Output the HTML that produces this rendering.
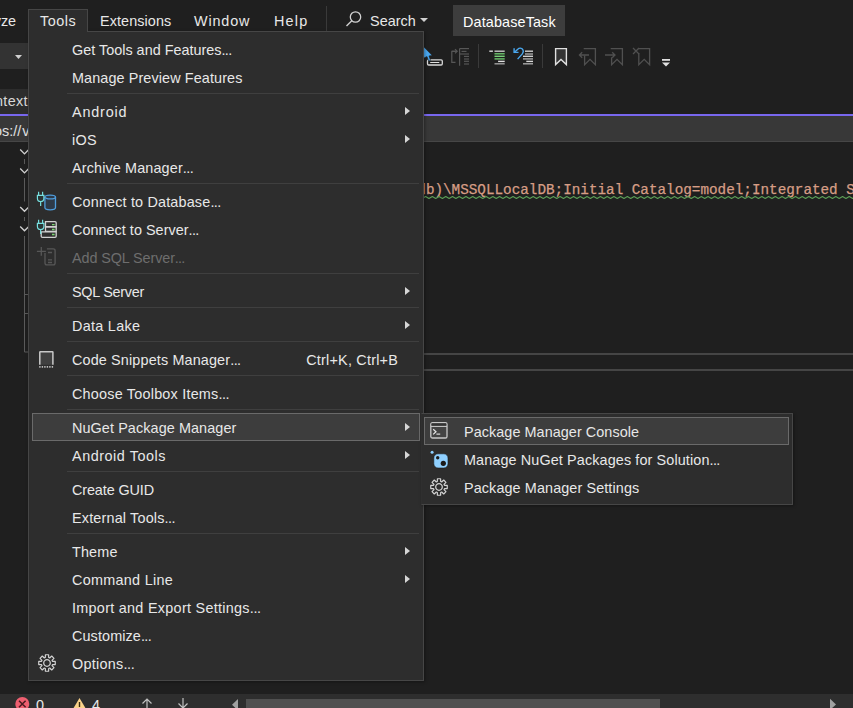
<!DOCTYPE html>
<html><head><meta charset="utf-8">
<style>
*{margin:0;padding:0;box-sizing:border-box}
html,body{width:853px;height:708px;overflow:hidden;background:#1f1f1f}
body{position:relative;font-family:"Liberation Sans",sans-serif;font-size:14.4px;color:#e8e8e8}
.a{position:absolute}
.t{position:absolute;white-space:nowrap;line-height:18px;height:18px}
.menu{position:absolute;background:#2d2d2d;border:1px solid #464646}
.row{position:absolute;left:32px;width:388px;height:28px}
.row .l{position:absolute;left:40px;top:6px;line-height:18px;white-space:nowrap}
.row .r{position:absolute;right:23px;top:6px;line-height:18px;white-space:nowrap}
.sep{position:absolute;left:67px;width:352px;height:1px;background:#3f3f3f}
.arr{position:absolute;left:373px;top:10px;width:0;height:0;border-top:4.8px solid transparent;border-bottom:4.8px solid transparent;border-left:5.2px solid #d6d6d6}
.dis{color:#6e6e6e}
.hl{background:#3d3d3d;border:1px solid #6a6a6a}
svg{position:absolute;overflow:visible}
i.d{font-style:normal;letter-spacing:-0.7px}
</style></head><body>

<!-- menubar -->
<div class="t" style="left:-9.5px;top:12px">lyze</div>

<div id="b2" class="t" style="left:100px;top:12px;letter-spacing:0.090px">Extensions</div>
<div id="b3" class="t" style="left:194px;top:12px;letter-spacing:0.860px">Window</div>
<div id="b4" class="t" style="left:274px;top:12px;letter-spacing:1.200px">Help</div>
<div class="a" style="left:326px;top:6px;width:1px;height:26px;background:#3a3a3a"></div>
<svg style="left:340px;top:8px" width="24" height="20" viewBox="0 0 24 20"><circle cx="15.5" cy="9" r="5.2" fill="none" stroke="#d0d0d0" stroke-width="1.3"/><line x1="11.8" y1="12.8" x2="6.5" y2="18" stroke="#d0d0d0" stroke-width="1.4"/></svg>
<div id="b5" class="t" style="left:370px;top:12px;letter-spacing:0.040px">Search</div>
<svg style="left:419px;top:17px" width="10" height="6"><path d="M1 1h8l-4 4z" fill="#d0d0d0"/></svg>
<div class="a" style="left:453px;top:5px;width:112px;height:31px;background:#3d3d3d"></div>
<div id="b6" class="t" style="left:463px;top:13px;color:#fff;letter-spacing:0.128px">DatabaseTask</div>

<!-- toolbar -->
<div class="a" style="left:0;top:43px;width:28px;height:26px;background:#333"></div>
<svg style="left:15px;top:55px" width="10" height="6"><path d="M0 0h7l-3.5 4z" fill="#d0d0d0"/></svg>

<!-- toolbar icons (origin 422,42) -->
<svg style="left:422px;top:42px" width="260" height="28" viewBox="0 0 260 28">
  <rect x="5.5" y="17.8" width="14.8" height="5.2" rx="1.2" fill="#1f1f1f" stroke="#d8d8d8" stroke-width="1.3"/>
  <line x1="8.2" y1="20.5" x2="17.3" y2="20.5" stroke="#e0e0e0" stroke-width="1"/>
  <path d="M1.5 4.6 L10.2 13.4 L7 13.9 L8.6 18.4 L6.6 19 L5 14.6 L1.5 16.2Z" fill="#4aa8f0" stroke="#1f1f1f" stroke-width="0.6"/>
  <g stroke="#575757" stroke-width="1.2" fill="none">
    <path d="M33.5 9.3 H29.8 V20.4 H33.5"/><path d="M30 9.3 H35"/><path d="M33 7.2 L35.2 9.3 L33 11.4"/>
    <line x1="37.6" y1="6.4" x2="37.6" y2="23.7"/>
    <line x1="37.6" y1="6.6" x2="47" y2="6.6"/><line x1="39.5" y1="9.4" x2="44.5" y2="9.4"/>
    <line x1="37.6" y1="12" x2="47" y2="12"/><line x1="42" y1="14.4" x2="47" y2="14.4"/>
    <line x1="42" y1="17" x2="47" y2="17"/><line x1="42" y1="19.3" x2="47" y2="19.3"/><line x1="42" y1="22" x2="47" y2="22"/>
  </g>
  <line x1="56.5" y1="2" x2="56.5" y2="26" stroke="#3a3a3a" stroke-width="1"/>
  <g stroke-width="1.4">
    <line x1="67.3" y1="9.2" x2="70.9" y2="9.2" stroke="#d8d8d8"/>
    <line x1="72.5" y1="9.2" x2="82.7" y2="9.2" stroke="#c8c8c8"/>
    <line x1="72.5" y1="11.8" x2="82.7" y2="11.8" stroke="#6cc46c"/>
    <line x1="72.5" y1="14.3" x2="82.7" y2="14.3" stroke="#78d078"/>
    <line x1="72.5" y1="16.9" x2="82.7" y2="16.9" stroke="#6cc46c"/>
    <line x1="76.1" y1="19.4" x2="82.7" y2="19.4" stroke="#e0e0e0"/>
    <line x1="72.5" y1="21.8" x2="82.7" y2="21.8" stroke="#a0a0a0"/>
  </g>
  <g stroke="#4aa8f0" stroke-width="1.4" fill="none">
    <path d="M95.6 17.1 L100.1 12.1 Q102.5 9 100.1 6.8 Q97.9 5.2 95.5 7.4 L92.7 10.1"/>
    <path d="M92.1 6.2 V10.4 H96.5"/>
  </g>
  <g stroke-width="1.4">
    <line x1="103" y1="9.2" x2="111" y2="9.2" stroke="#d0d0d0"/>
    <line x1="103" y1="12" x2="111" y2="12" stroke="#a8a8a8"/>
    <line x1="101" y1="14.3" x2="111" y2="14.3" stroke="#d0d0d0"/>
    <line x1="101" y1="16.9" x2="111" y2="16.9" stroke="#a8a8a8"/>
    <line x1="104.3" y1="19.4" x2="111" y2="19.4" stroke="#d8d8d8"/>
    <line x1="101" y1="21.8" x2="111" y2="21.8" stroke="#a8a8a8"/>
  </g>
  <line x1="120.5" y1="2" x2="120.5" y2="26" stroke="#3a3a3a" stroke-width="1"/>
  <path d="M133.6 6.6 H144.4 V22.6 L139 17.4 L133.6 22.6Z" fill="#333" stroke="#e0e0e0" stroke-width="1.4" stroke-linejoin="miter"/>
  <g stroke="#505050" stroke-width="1.3" fill="none">
    <path d="M161.7 6.6 H173.4 V22.6 L168 17.4 L162.6 22.6 V13.5"/>
    <path d="M167 13 H157.4 M160.2 10.2 L157.4 13 L160.2 15.8"/>
    <path d="M188.7 6.6 H200.4 V22.6 L195 17.4 L189.6 22.6 V15.2"/>
    <path d="M183 13 H193 M190.2 10.2 L193 13 L190.2 15.8"/>
    <path d="M216 6.6 H227.6 V22.6 L222.2 17.4 L216.8 22.6 V11"/>
    <path d="M211 6 L217 12 M217 6 L211 12"/>
  </g>
  <rect x="240" y="17" width="8" height="1.8" fill="#e0e0e0"/>
  <path d="M240 20.4 H248 L244 24.6Z" fill="#e0e0e0"/>
</svg>

<!-- tab strip -->
<div class="a" style="left:0;top:89px;width:28px;height:25px;background:#2d2d2d"></div>
<div class="t" style="left:-5px;top:92px;color:#d8d8d8;letter-spacing:0.35px">ntext</div>
<div class="a" style="left:0;top:114px;width:853px;height:2px;background:#7867ee"></div>
<div class="a" style="left:0;top:116px;width:853px;height:25px;background:#383838"></div>
<div class="a" style="left:0;top:141px;width:853px;height:1px;background:#464646"></div>
<div class="t" style="left:-6px;top:122px;color:#e0e0e0">os:/<span style="letter-spacing:1px">/</span>v</div>

<!-- left tree -->
<svg style="left:0;top:140px" width="30" height="220" viewBox="0 0 30 220">
  <g stroke="#d0d0d0" stroke-width="1.35" fill="none">
    <path d="M20.2 9.6 L24.5 13.9 L28.8 9.6"/>
    <path d="M20.2 28.6 L24.5 32.9 L28.8 28.6"/>
    <path d="M20.2 67 L24.5 71.3 L28.8 67"/>
    <path d="M20.2 86.4 L24.5 90.7 L28.8 86.4"/>
  </g>
  <g stroke="#5a5a5a" stroke-width="1" fill="none">
    <path d="M24.5 19 V24 M24.5 77 V81"/>
    <path d="M24.5 38 V61.5"/>
    <path d="M24.5 96 V212 H28 M24.5 154.5 H28 M24.5 173.5 H28"/>
  </g>
</svg>

<!-- editor -->
<div id="code" class="t" style="left:417.3px;top:181px;font-family:'Liberation Mono',monospace;font-size:14.307px;color:#d69d85;-webkit-text-stroke:0.25px #d69d85">db)\MSSQLLocalDB;Initial Catalog=model;Integrated Security</div>
<svg style="left:424px;top:195px" width="429" height="4" viewBox="0 0 429 4"><path id="sq" d="M-11.85 1.5 L-8.49 3.4 L-5.12 1.5 L-1.76 3.4 L1.60 1.5 L4.96 3.4 L8.33 1.5 L11.69 3.4 L15.05 1.5 L18.41 3.4 L21.78 1.5 L25.14 3.4 L28.50 1.5 L31.86 3.4 L35.23 1.5 L38.59 3.4 L41.95 1.5 L45.31 3.4 L48.68 1.5 L52.04 3.4 L55.40 1.5 L58.76 3.4 L62.13 1.5 L65.49 3.4 L68.85 1.5 L72.21 3.4 L75.58 1.5 L78.94 3.4 L82.30 1.5 L85.66 3.4 L89.03 1.5 L92.39 3.4 L95.75 1.5 L99.11 3.4 L102.47 1.5 L105.84 3.4 L109.20 1.5 L112.56 3.4 L115.92 1.5 L119.29 3.4 L122.65 1.5 L126.01 3.4 L129.37 1.5 L132.74 3.4 L136.10 1.5 L139.46 3.4 L142.82 1.5 L146.19 3.4 L149.55 1.5 L152.91 3.4 L156.27 1.5 L159.64 3.4 L163.00 1.5 L166.36 3.4 L169.72 1.5 L173.09 3.4 L176.45 1.5 L179.81 3.4 L183.17 1.5 L186.54 3.4 L189.90 1.5 L193.26 3.4 L196.62 1.5 L199.99 3.4 L203.35 1.5 L206.71 3.4 L210.07 1.5 L213.44 3.4 L216.80 1.5 L220.16 3.4 L223.52 1.5 L226.89 3.4 L230.25 1.5 L233.61 3.4 L236.97 1.5 L240.34 3.4 L243.70 1.5 L247.06 3.4 L250.42 1.5 L253.79 3.4 L257.15 1.5 L260.51 3.4 L263.87 1.5 L267.24 3.4 L270.60 1.5 L273.96 3.4 L277.32 1.5 L280.69 3.4 L284.05 1.5 L287.41 3.4 L290.77 1.5 L294.14 3.4 L297.50 1.5 L300.86 3.4 L304.23 1.5 L307.59 3.4 L310.95 1.5 L314.31 3.4 L317.68 1.5 L321.04 3.4 L324.40 1.5 L327.76 3.4 L331.13 1.5 L334.49 3.4 L337.85 1.5 L341.21 3.4 L344.58 1.5 L347.94 3.4 L351.30 1.5 L354.66 3.4 L358.03 1.5 L361.39 3.4 L364.75 1.5 L368.11 3.4 L371.48 1.5 L374.84 3.4 L378.20 1.5 L381.56 3.4 L384.93 1.5 L388.29 3.4 L391.65 1.5 L395.01 3.4 L398.38 1.5 L401.74 3.4 L405.10 1.5 L408.46 3.4 L411.83 1.5 L415.19 3.4 L418.55 1.5 L421.91 3.4 L425.28 1.5 L428.64 3.4 L432.00 1.5 L435.36 3.4 L438.73 1.5 L442.09 3.4 L445.45 1.5" fill="none" stroke="#5c9e56" stroke-width="1.15" stroke-linejoin="round"/></svg>
<div class="a" style="left:423px;top:353px;width:430px;height:2px;background:#454545"></div>
<div class="a" style="left:423px;top:369px;width:430px;height:2px;background:#454545"></div>

<!-- bottom status -->
<div class="a" style="left:0;top:694px;width:853px;height:14px;background:#2e2e2e"></div>
<svg style="left:0;top:694px" width="853" height="14" viewBox="0 0 853 14">
  <circle cx="22.3" cy="10" r="7" fill="#ee5f70"/>
  <path d="M19 6.7 L25.6 13.3 M25.6 6.7 L19 13.3" stroke="#4a1a20" stroke-width="1.5"/>
  <path d="M79.5 4 L86 15 H73Z" fill="#fbd38a"/>
  <rect x="78.8" y="8" width="1.4" height="5" fill="#3a2e10"/>
  <g stroke="#c0c0c0" stroke-width="1.2" fill="none">
    <path d="M147 5 V14 M142.5 9.5 L147 5 L151.5 9.5"/>
    <path d="M183 4 V14 M178.5 9.5 L183 14 L187.5 9.5"/>
  </g>
  <path d="M238 5 V16.4 L232 10.7Z" fill="#a0a0a0"/>
  <rect x="246" y="5" width="414" height="9" fill="#505050"/>
  <path d="M830 4.8 V16 L836 10.4Z" fill="#a0a0a0"/>
</svg>
<div class="t" style="left:36px;top:696px">0</div>
<div class="t" style="left:92px;top:696px">4</div>

<!-- MENU -->
<div class="menu" style="left:28px;top:31px;width:396px;height:650px;box-shadow:1px 1px 3px rgba(0,0,0,0.35)"></div>
<div class="a" style="left:28px;top:9px;width:60px;height:23px;background:#2d2d2d;border:1px solid #464646;border-bottom:none"></div>
<div class="a" style="left:29px;top:31px;width:58px;height:1px;background:#2d2d2d"></div>
<div id="b1" class="t" style="left:40px;top:12px;letter-spacing:0.525px">Tools</div>

<div class="row" style="top:35px"><span id="m1" class="l" style="letter-spacing:0.009px">Get Tools and Features<i class="d" style="letter-spacing:-0.691px">...</i></span></div>
<div class="row" style="top:63px"><span id="m2" class="l" style="letter-spacing:0.109px">Manage Preview Features</span></div>
<div class="sep" style="top:93px"></div>
<div class="row" style="top:97px"><span id="m3" class="l" style="letter-spacing:0.833px">Android</span><i class="arr"></i></div>
<div class="row" style="top:125px"><span id="m4" class="l" style="letter-spacing:0.300px">iOS</span><i class="arr"></i></div>
<div class="row" style="top:153px"><span id="m5" class="l" style="letter-spacing:0.136px">Archive Manager<i class="d" style="letter-spacing:-0.564px">...</i></span></div>
<div class="sep" style="top:183px"></div>
<div class="row" style="top:187px"><span id="m6" class="l" style="letter-spacing:0.167px">Connect to Database<i class="d" style="letter-spacing:-0.533px">...</i></span></div>
<div class="row" style="top:215px"><span id="m7" class="l" style="letter-spacing:0.033px">Connect to Server<i class="d" style="letter-spacing:-0.667px">...</i></span></div>
<div class="row" style="top:243px"><span id="m8" class="l dis" style="letter-spacing:-0.1px">Add SQL Server<i class="d" style="letter-spacing:-0.8px">...</i></span></div>
<div class="sep" style="top:273px"></div>
<div class="row" style="top:277px"><span id="m9" class="l" style="letter-spacing:-0.267px">SQL Server</span><i class="arr"></i></div>
<div class="sep" style="top:307px"></div>
<div class="row" style="top:311px"><span id="m10" class="l" style="letter-spacing:0.289px">Data Lake</span><i class="arr"></i></div>
<div class="sep" style="top:341px"></div>
<div class="row" style="top:345px"><span id="m11" class="l" style="letter-spacing:0.143px">Code Snippets Manager<i class="d" style="letter-spacing:-0.557px">...</i></span><span id="k1" class="r" style="letter-spacing:0.215px;right:22px">Ctrl+K, Ctrl+B</span></div>
<div class="sep" style="top:375px"></div>
<div class="row" style="top:379px"><span id="m12" class="l" style="letter-spacing:0.218px">Choose Toolbox Items<i class="d" style="letter-spacing:-0.482px">...</i></span></div>
<div class="sep" style="top:409px"></div>
<div class="row hl" style="top:413px"><span id="m13" class="l" style="left:39px;top:5px;letter-spacing:0.095px">NuGet Package Manager</span><i class="arr" style="left:372px;top:9px"></i></div>
<div class="row" style="top:441px"><span id="m14" class="l" style="letter-spacing:0.542px">Android Tools</span><i class="arr"></i></div>
<div class="sep" style="top:471px"></div>
<div class="row" style="top:475px"><span id="m15" class="l" style="letter-spacing:-0.110px">Create GUID</span></div>
<div class="row" style="top:503px"><span id="m16" class="l" style="letter-spacing:0.176px">External Tools<i class="d" style="letter-spacing:-0.524px">...</i></span></div>
<div class="sep" style="top:533px"></div>
<div class="row" style="top:537px"><span id="m17" class="l" style="letter-spacing:0.150px">Theme</span><i class="arr"></i></div>
<div class="row" style="top:565px"><span id="m18" class="l" style="letter-spacing:0.290px">Command Line</span><i class="arr"></i></div>
<div class="row" style="top:593px"><span id="m19" class="l" style="letter-spacing:0.286px">Import and Export Settings<i class="d" style="letter-spacing:-0.414px">...</i></span></div>
<div class="row" style="top:621px"><span id="m20" class="l" style="letter-spacing:0.108px">Customize<i class="d" style="letter-spacing:-0.592px">...</i></span></div>
<div class="row" style="top:649px"><span id="m21" class="l" style="letter-spacing:0.278px">Options<i class="d" style="letter-spacing:-0.422px">...</i></span></div>

<!-- menu icons -->
<!-- connect to database, origin 34,189 -->
<svg style="left:34px;top:189px" width="26" height="24" viewBox="0 0 26 24">
  <path d="M10.9 8 V18.6 Q10.9 20.8 16.2 20.8 Q21.5 20.8 21.5 18.6 V8" fill="#2e3a48" stroke="#4f9ddc" stroke-width="1.3"/>
  <ellipse cx="16.2" cy="8" rx="5.3" ry="1.9" fill="#2e3a48" stroke="#4f9ddc" stroke-width="1.3"/>
  <g stroke="#76dede" stroke-width="1.2" fill="none">
    <path d="M4.6 2.8 V6.2 M8.6 2.8 V6.2"/>
    <path d="M3.4 6.3 H9.9 V9.2 Q9.9 12.5 6.65 12.5 Q3.4 12.5 3.4 9.2Z" fill="#2a3636"/>
    <path d="M6.65 12.5 V17"/>
  </g>
</svg>
<!-- connect to server, origin 34,217 -->
<svg style="left:34px;top:217px" width="26" height="24" viewBox="0 0 26 24">
  <g stroke="#d0d0d0" stroke-width="1.3" fill="#303030">
    <path d="M11.5 4.6 H21 Q22.2 4.6 22.2 5.8 V9.6 H11.5Z"/>
    <path d="M11.5 10 H22.2 V14.5 H11.5Z"/>
    <path d="M7.2 14.9 H22.2 V19.2 Q22.2 20.3 21 20.3 H8.4 Q7.2 20.3 7.2 19.2Z"/>
  </g>
  <g stroke="#7ad870" stroke-width="1.3"><path d="M18 7.6 H20.6 M18 12.5 H20.6 M18 17.5 H20.6"/></g>
  <g stroke="#76dede" stroke-width="1.2" fill="none">
    <path d="M4.6 2.8 V6.2 M8.6 2.8 V6.2"/>
    <path d="M3.4 6.3 H9.9 V9.2 Q9.9 12.5 6.65 12.5 Q3.4 12.5 3.4 9.2Z" fill="#2a3636"/>
    <path d="M6.65 12.5 V17"/>
  </g>
</svg>
<!-- add sql server (disabled), origin 34,245 -->
<svg style="left:34px;top:245px" width="26" height="24" viewBox="0 0 26 24">
  <g stroke="#575757" stroke-width="1.3" fill="none">
    <path d="M2.9 6.4 H11.9 M7.3 1.9 V10.8"/>
    <path d="M11 8.1 V18 Q11 19.9 12.9 19.9 H19.2 Q21.1 19.9 21.1 18 V5.7 Q21.1 3.8 19.2 3.8 H12.9"/>
    <path d="M14 7.5 H18 M14 14.9 H18 M14 17.5 H18"/>
  </g>
</svg>
<!-- code snippets, origin 34,345 -->
<svg style="left:34px;top:345px" width="26" height="28" viewBox="0 0 26 28">
  <path d="M5.8 19.7 V7.2 Q5.8 6.7 6.3 6.7 H18.4 Q18.9 6.7 18.9 7.2 V19.7" fill="#404040" stroke="#c8c8c8" stroke-width="1.5"/>
  <path d="M5.2 21.9 H19.5" stroke="#bdbdbd" stroke-width="1.6" stroke-dasharray="1.4 1.1"/>
</svg>
<!-- options gear -->
<svg style="left:38px;top:654px" width="18" height="18" viewBox="-9 -9 18 18">
  <path id="gear" d="M-1.67 -5.45 L-1.60 -8.25 L1.60 -8.25 L1.67 -5.45 L2.68 -5.03 L4.70 -6.96 L6.96 -4.70 L5.03 -2.68 L5.45 -1.67 L8.25 -1.60 L8.25 1.60 L5.45 1.67 L5.03 2.68 L6.96 4.70 L4.70 6.96 L2.68 5.03 L1.67 5.45 L1.60 8.25 L-1.60 8.25 L-1.67 5.45 L-2.68 5.03 L-4.70 6.96 L-6.96 4.70 L-5.03 2.68 L-5.45 1.67 L-8.25 1.60 L-8.25 -1.60 L-5.45 -1.67 L-5.03 -2.68 L-6.96 -4.70 L-4.70 -6.96 L-2.68 -5.03Z" fill="none" stroke="#d2d2d2" stroke-width="1.2" stroke-linejoin="round"/>
  <circle r="3.3" fill="none" stroke="#d2d2d2" stroke-width="1.25"/>
</svg>

<!-- SUBMENU -->
<div class="menu" style="left:421px;top:413px;width:372px;height:92px;border-left-color:#2f2f2f;box-shadow:1px 1px 3px rgba(0,0,0,0.35)"></div>
<div class="a hl" style="left:424px;top:417px;width:365px;height:28px"></div>
<div id="s1" class="t" style="left:464px;top:423px;letter-spacing:0.064px">Package Manager Console</div>
<div id="s2" class="t" style="left:464px;top:451px;letter-spacing:0.115px">Manage NuGet Packages for Solution<i class="d" style="letter-spacing:-0.585px">...</i></div>
<div id="s3" class="t" style="left:464px;top:479px;letter-spacing:0.104px">Package Manager Settings</div>
<!-- console icon origin 426,419 -->
<svg style="left:426px;top:419px" width="26" height="24" viewBox="0 0 26 24">
  <rect x="4.8" y="3.7" width="16.2" height="15.3" rx="1.6" fill="#444" stroke="#c8c8c8" stroke-width="1.3"/>
  <path d="M4.8 7.3 H21" stroke="#c8c8c8" stroke-width="1.3"/>
  <rect x="5.5" y="4.4" width="14.8" height="2.3" fill="#333"/>
  <path d="M7.2 10.2 L10 12.8 L7.2 15.4" fill="none" stroke="#e6e6e6" stroke-width="1.2"/>
  <path d="M10.4 15.1 H14.2" stroke="#e6e6e6" stroke-width="1.1"/>
</svg>
<!-- nuget icon origin 426,448 -->
<svg style="left:426px;top:448px" width="26" height="24" viewBox="0 0 26 24">
  <circle cx="6.1" cy="4.2" r="1.5" fill="#8ccfff"/>
  <rect x="7.8" y="5.8" width="14.2" height="14.2" rx="4.2" fill="#8fd0ff" stroke="#1a1a1a" stroke-width="0.6"/>
  <circle cx="11.7" cy="9.7" r="1.7" fill="#1a1a1a"/>
  <circle cx="17.3" cy="15.3" r="2.6" fill="#1a1a1a"/>
</svg>
<svg style="left:430px;top:478px" width="18" height="18" viewBox="-9 -9 18 18">
  <path class="gear2" d="M-1.67 -5.45 L-1.60 -8.25 L1.60 -8.25 L1.67 -5.45 L2.68 -5.03 L4.70 -6.96 L6.96 -4.70 L5.03 -2.68 L5.45 -1.67 L8.25 -1.60 L8.25 1.60 L5.45 1.67 L5.03 2.68 L6.96 4.70 L4.70 6.96 L2.68 5.03 L1.67 5.45 L1.60 8.25 L-1.60 8.25 L-1.67 5.45 L-2.68 5.03 L-4.70 6.96 L-6.96 4.70 L-5.03 2.68 L-5.45 1.67 L-8.25 1.60 L-8.25 -1.60 L-5.45 -1.67 L-5.03 -2.68 L-6.96 -4.70 L-4.70 -6.96 L-2.68 -5.03Z" fill="none" stroke="#d2d2d2" stroke-width="1.2" stroke-linejoin="round"/>
  <circle r="3.3" fill="none" stroke="#d2d2d2" stroke-width="1.25"/>
</svg>

</body></html>
